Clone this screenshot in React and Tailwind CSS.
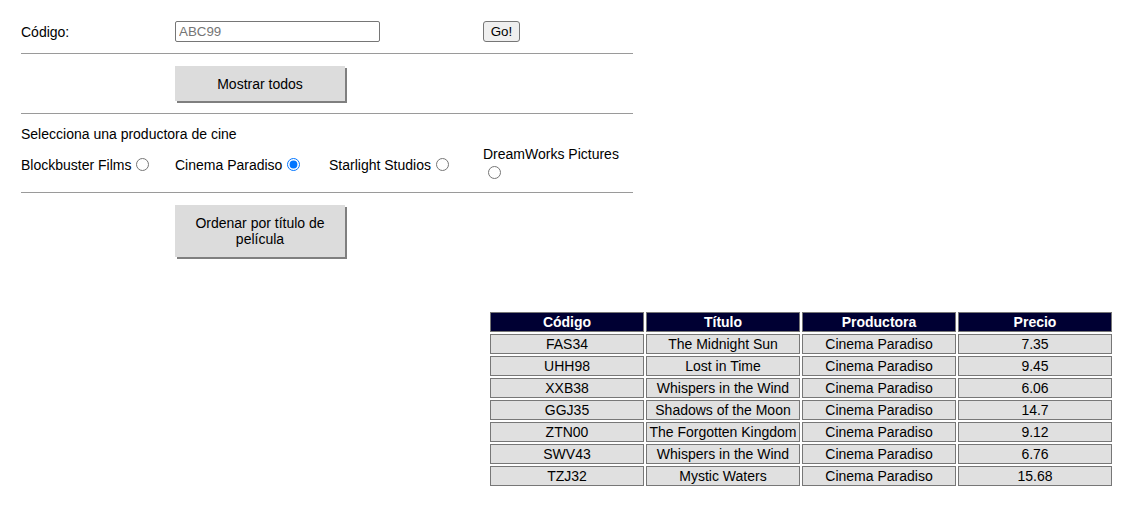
import React from "react";

const rows = [
  ["FAS34", "The Midnight Sun", "Cinema Paradiso", "7.35"],
  ["UHH98", "Lost in Time", "Cinema Paradiso", "9.45"],
  ["XXB38", "Whispers in the Wind", "Cinema Paradiso", "6.06"],
  ["GGJ35", "Shadows of the Moon", "Cinema Paradiso", "14.7"],
  ["ZTN00", "The Forgotten Kingdom", "Cinema Paradiso", "9.12"],
  ["SWV43", "Whispers in the Wind", "Cinema Paradiso", "6.76"],
  ["TZJ32", "Mystic Waters", "Cinema Paradiso", "15.68"],
];

export default function App() {
  return (
    <div className="min-h-[527px] w-[1132px] bg-white text-black text-[14px] leading-4 font-['Liberation_Sans',Arial,sans-serif]">
      <div className="pl-[21px] pt-[21px] w-[633px]">
        <div className="grid grid-cols-[154px_154px_154px_154px] items-center h-[21px]">
          <span>Código:</span>
          <input
            type="text"
            placeholder="ABC99"
            className="w-[205px] h-[21px] border border-[#767676] rounded-[2px] px-[3px] text-[13.33px] placeholder:text-[#757575] outline-none font-['Liberation_Sans',Arial,sans-serif]"
          />
          <span />
          <div>
            <button className="w-[37px] h-[21px] bg-[#efefef] border border-[#767676] rounded-[3px] text-[13.33px] leading-none font-['Liberation_Sans',Arial,sans-serif]">
              Go!
            </button>
          </div>
        </div>
        <div className="mt-[11px] h-px w-[612px] bg-[#9a9a9a]" />
        <div className="grid grid-cols-[154px_154px_154px_154px] mt-[12px]">
          <span />
          <button className="w-[170px] h-[35px] bg-[#dcdcdc] shadow-[2px_2px_0_#7f7f7f] text-[14px] leading-4 font-['Liberation_Sans',Arial,sans-serif]">
            Mostrar todos
          </button>
        </div>
        <div className="mt-[12px] h-px w-[612px] bg-[#9a9a9a]" />
        <div className="mt-[12px] h-4 leading-4">Selecciona una productora de cine</div>
        <div className="grid grid-cols-[154px_154px_154px_154px] items-center mt-[3px]">
          <label>
            Blockbuster Films<input type="radio" name="prod" className="ml-[5px] mr-[3px] mt-[3px] w-[13px] h-[13px] align-[-1px]" />
          </label>
          <label>
            Cinema Paradiso<input type="radio" name="prod" defaultChecked className="ml-[5px] mr-[3px] mt-[3px] w-[13px] h-[13px] align-[-1px]" />
          </label>
          <label>
            Starlight Studios<input type="radio" name="prod" className="ml-[5px] mr-[3px] mt-[3px] w-[13px] h-[13px] align-[-1px]" />
          </label>
          <label className="leading-[18px]">
            DreamWorks Pictures <input type="radio" name="prod" className="ml-[5px] mr-[3px] mt-[3px] w-[13px] h-[13px] align-[-1px]" />
          </label>
        </div>
        <div className="mt-[10px] h-px w-[612px] bg-[#9a9a9a]" />
        <div className="grid grid-cols-[154px_154px_154px_154px] mt-[12px]">
          <span />
          <button className="w-[170px] h-[52px] px-[20px] bg-[#dcdcdc] shadow-[2px_2px_0_#7f7f7f] text-[14px] leading-4 font-['Liberation_Sans',Arial,sans-serif]">
            Ordenar por título de película
          </button>
        </div>
      </div>
      <div className="flex justify-end pr-[18px] mt-[53px]">
        <table className="table-fixed border-separate border-spacing-[2px] w-[626px]">
          <thead>
            <tr>
              {["Código", "Título", "Productora", "Precio"].map((h) => (
                <th key={h} className="w-[154px] h-[20px] p-0 bg-[#000033] text-white font-bold border border-[#777] text-center leading-4">
                  {h}
                </th>
              ))}
            </tr>
          </thead>
          <tbody>
            {rows.map((r) => (
              <tr key={r[0]}>
                {r.map((c, i) => (
                  <td key={i} className="w-[154px] h-[20px] p-0 bg-[#e0e0e0] border border-[#777] text-center leading-4 whitespace-nowrap">
                    {c}
                  </td>
                ))}
              </tr>
            ))}
          </tbody>
        </table>
      </div>
    </div>
  );
}
